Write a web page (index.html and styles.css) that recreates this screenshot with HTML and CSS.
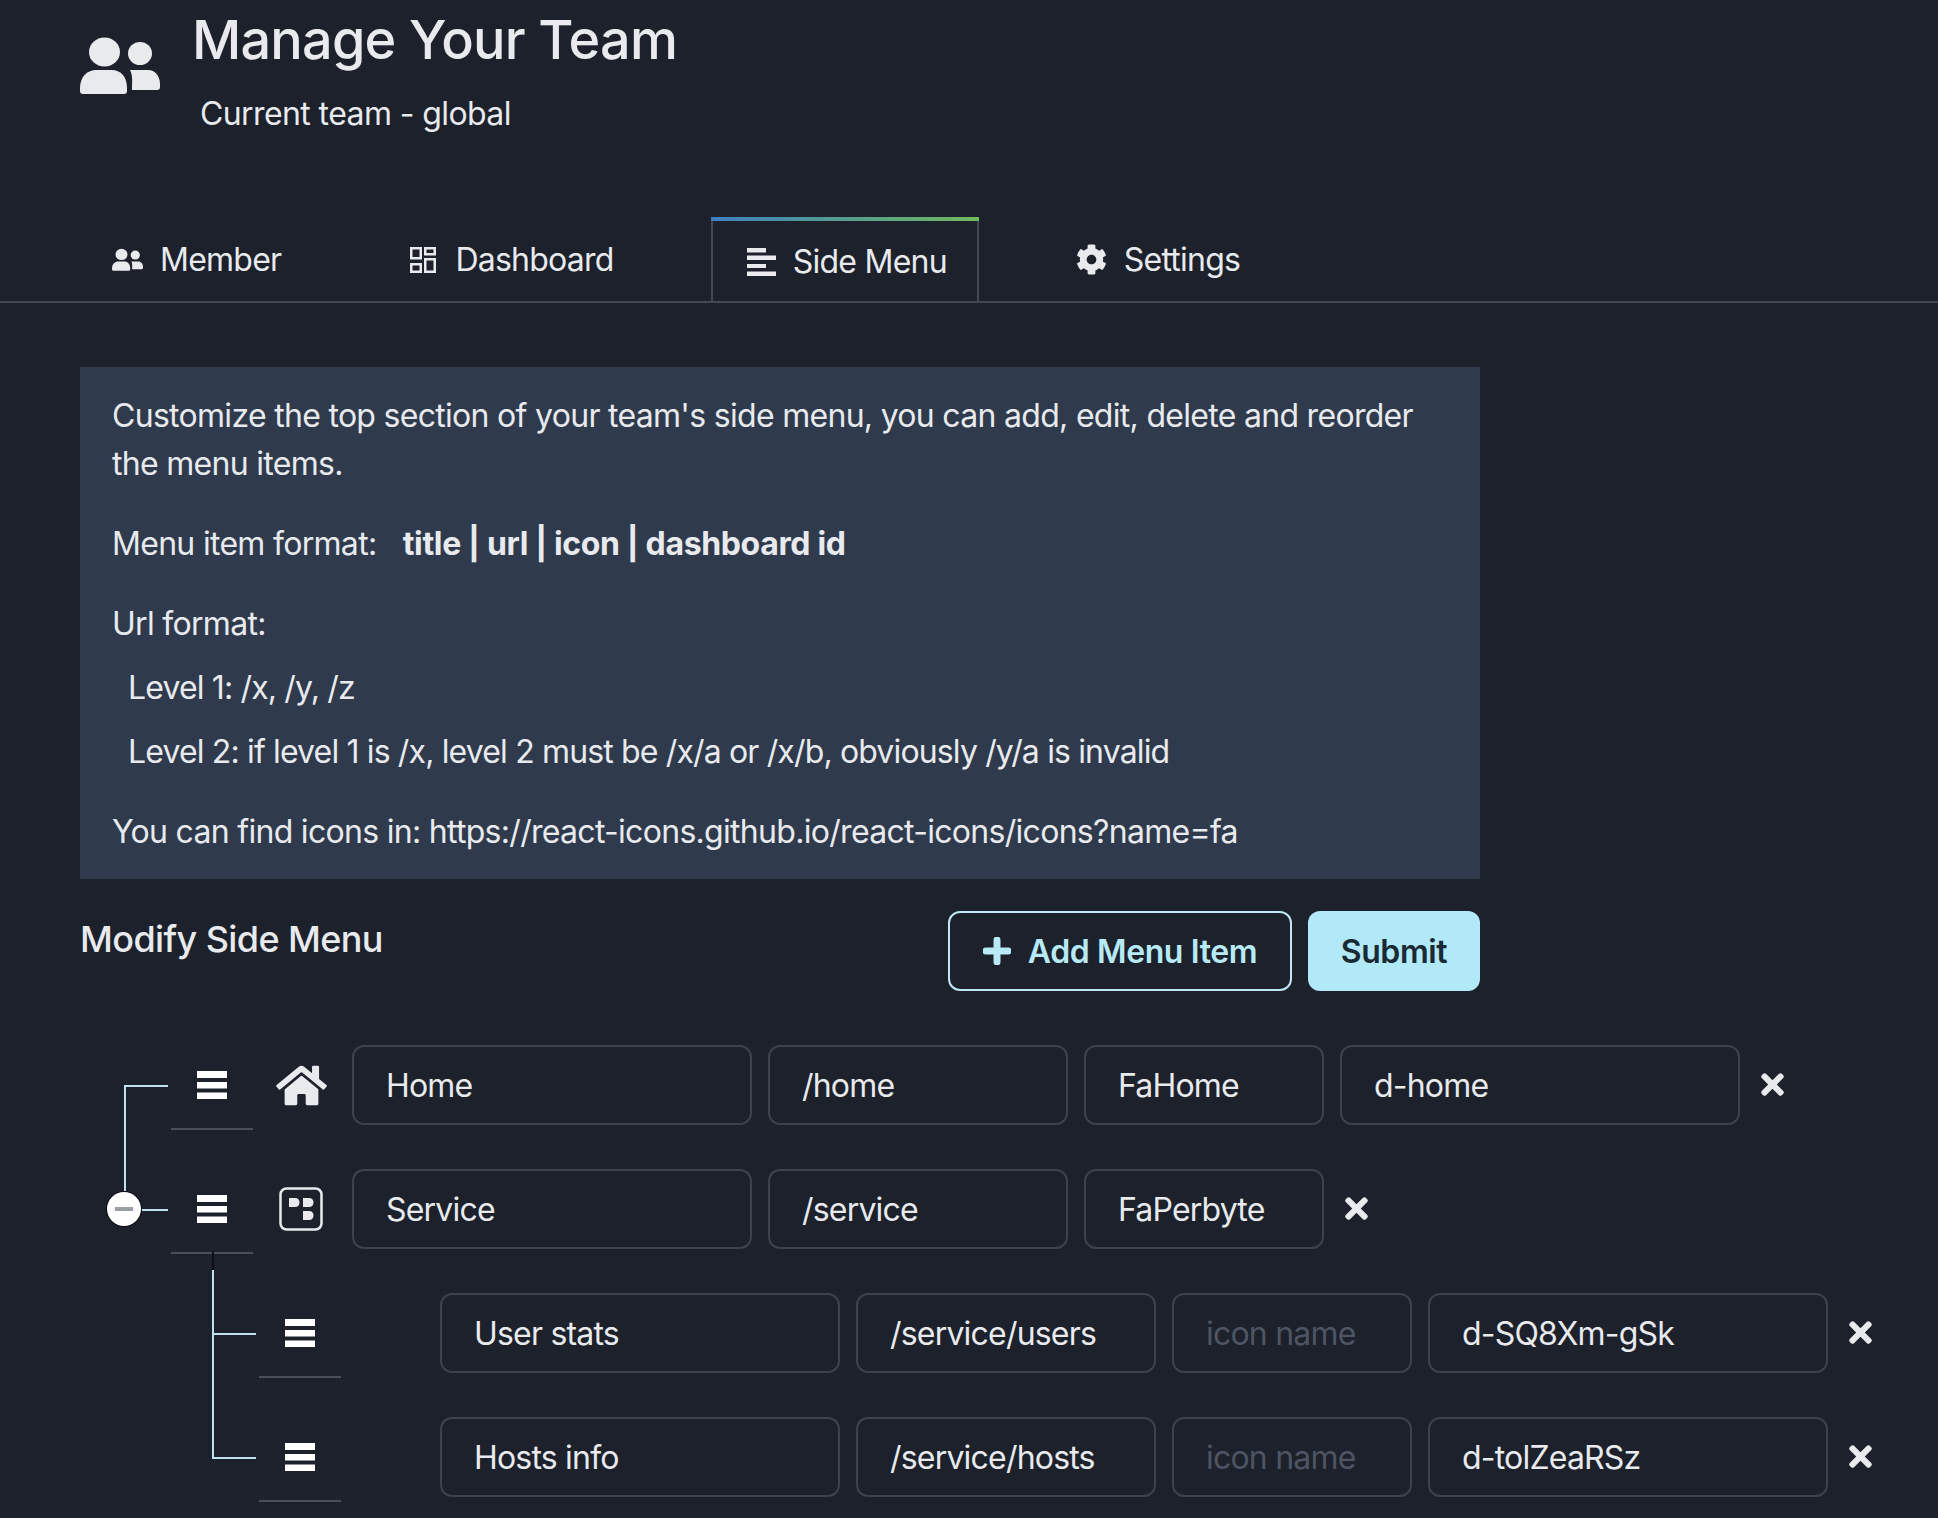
FILE: index.html
```html
<!DOCTYPE html>
<html lang="en">
<head>
    <meta charset="UTF-8">
    <meta name="viewport" content="width=device-width, initial-scale=1.0">
    <title>Manage Your Team</title>
    <link rel="stylesheet" href="styles.css">
</head>
<body>
    <svg class="defs" width="0" height="0">
        <symbol id="i-users" viewBox="0 0 80 58">
            <ellipse cx="24.500" cy="16" rx="15.500" ry="14.500"/>
            <ellipse cx="60" cy="17.500" rx="12" ry="11.500"/>
            <path d="M0 52C0 40 8 34 16 34H32C40 34 47 40 47 52V55Q47 58 44 58H3Q0 58 0 55Z"/>
            <path d="M50 34H68C75 34 80 40 80 48V51Q80 54 77 54H52C52 46 53 40 50 34Z"/>
        </symbol>
        <symbol id="i-bars" viewBox="0 0 30 28">
            <rect x="0" y="0" width="30" height="7"/>
            <rect x="0" y="11" width="30" height="6.500"/>
            <rect x="0" y="21.500" width="30" height="6.500"/>
        </symbol>
        <symbol id="i-times" viewBox="0 0 352 512">
            <path d="M242.72 256l100.07-100.07c12.28-12.28 12.28-32.19 0-44.48l-22.24-22.24c-12.28-12.28-32.19-12.28-44.48 0L176 189.28 75.93 89.21c-12.28-12.28-32.19-12.28-44.48 0L9.21 111.45c-12.28 12.28-12.28 32.19 0 44.48L109.28 256 9.21 356.07c-12.28 12.28-12.28 32.19 0 44.48l22.24 22.24c12.28 12.28 32.2 12.28 44.48 0L176 322.72l100.07 100.07c12.28 12.28 32.2 12.28 44.48 0l22.24-22.24c12.28-12.28 12.28-32.19 0-44.48L242.72 256z"/>
        </symbol>
    </svg>

    <div class="container">
        <div class="header">
            <svg class="team-icon"><use href="#i-users"/></svg>
            <div>
                <h1>Manage Your Team</h1>
                <p class="current-team">Current team - global</p>
            </div>
        </div>

        <div class="tabs">
            <div class="tab">
                <svg class="tab-icon member-icon"><use href="#i-users"/></svg>
                Member
            </div>
            <div class="tab">
                <svg class="tab-icon dash-icon" viewBox="0 0 26 26">
                    <rect x="1.250" y="1.250" width="9.500" height="10"/>
                    <rect x="15.250" y="1.250" width="9.500" height="6"/>
                    <rect x="1.250" y="17.250" width="9.500" height="7.500"/>
                    <rect x="15.250" y="12.250" width="9.500" height="12.500"/>
                </svg>
                Dashboard
            </div>
            <div class="tab active">
                <svg class="tab-icon menu-icon" viewBox="0 0 29 28">
                    <rect x="0" y="0" width="19" height="4.500"/>
                    <rect x="0" y="7.500" width="29" height="4.500"/>
                    <rect x="0" y="16" width="19" height="4"/>
                    <rect x="0" y="23.500" width="29" height="4.500"/>
                </svg>
                Side Menu
            </div>
            <div class="tab">
                <svg class="tab-icon cog-icon" viewBox="0 0 512 512">
                    <path d="M487.4 315.7l-42.6-24.6c4.3-23.2 4.3-47 0-70.2l42.6-24.6c4.9-2.8 7.1-8.6 5.5-14-11.1-35.6-30-67.8-54.7-94.6-3.8-4.1-10-5.1-14.8-2.3L380.8 110c-17.9-15.4-38.5-27.3-60.8-35.1V25.8c0-5.6-3.9-10.5-9.4-11.7-36.7-8.2-74.3-7.8-109.2 0-5.5 1.2-9.4 6.1-9.4 11.7V75c-22.2 7.9-42.8 19.8-60.8 35.1L88.7 85.5c-4.9-2.8-11-1.9-14.8 2.3-24.7 26.7-43.6 58.9-54.7 94.6-1.7 5.4.6 11.2 5.5 14L67.3 221c-4.3 23.2-4.3 47 0 70.2l-42.6 24.6c-4.9 2.8-7.1 8.6-5.5 14 11.1 35.6 30 67.8 54.7 94.6 3.8 4.1 10 5.1 14.8 2.3l42.6-24.6c17.9 15.4 38.5 27.3 60.8 35.1v49.2c0 5.6 3.9 10.5 9.4 11.7 36.7 8.2 74.3 7.8 109.2 0 5.5-1.2 9.4-6.1 9.4-11.7v-49.2c22.2-7.9 42.8-19.8 60.8-35.1l42.6 24.6c4.9 2.8 11 1.9 14.8-2.3 24.7-26.7 43.6-58.9 54.7-94.6 1.5-5.5-.7-11.3-5.6-14.1zM256 336c-44.1 0-80-35.9-80-80s35.9-80 80-80 80 35.9 80 80-35.9 80-80 80z"/>
                </svg>
                Settings
            </div>
        </div>

        <div class="content">
            <div class="info">
                <p>Customize the top section of your team's side menu, you can add, edit, delete and reorder the menu items.</p>
                <p>Menu item format: <b>title | url | icon | dashboard id</b></p>
                <p>Url format:</p>
                <p class="level">Level 1: /x, /y, /z</p>
                <p class="level">Level 2: if level 1 is /x, level 2 must be /x/a or /x/b, obviously /y/a is invalid</p>
                <p>You can find icons in: https://react-icons.github.io/react-icons/icons?name=fa</p>
            </div>

            <div class="toolbar">
                <h2>Modify Side Menu</h2>
                <div class="actions">
                    <button class="btn outline" type="button">
                        <svg class="plus" viewBox="0 0 28 28"><path d="M14 3v22M3 14h22"/></svg>
                        Add Menu Item
                    </button>
                    <button class="btn solid" type="button">Submit</button>
                </div>
            </div>
        </div>

        <div class="tree">
            <div class="line home-v"></div>
            <div class="line home-h"></div>
            <div class="line service-h"></div>
            <div class="collapse"><span></span></div>
            <div class="line dark-stub"></div>
            <div class="line child-v"></div>
            <div class="line child-h1"></div>
            <div class="line child-h2"></div>

            <div class="row">
                <div class="handle"><svg class="bars"><use href="#i-bars"/></svg></div>
                <div class="item-icon">
                    <svg class="home-icon" viewBox="0 0 576 512">
                        <path d="M280.37 148.26L96 300.11V464a16 16 0 0 0 16 16l112.06-.29a16 16 0 0 0 15.92-16V368a16 16 0 0 1 16-16h64a16 16 0 0 1 16 16v95.64a16 16 0 0 0 16 16.05L464 480a16 16 0 0 0 16-16V300L295.67 148.26a12.19 12.19 0 0 0-15.3 0zM571.6 251.47L488 182.56V44.05a12 12 0 0 0-12-12h-56a12 12 0 0 0-12 12v72.61L318.47 43a48 48 0 0 0-61 0L4.34 251.47a12 12 0 0 0-1.6 16.9l25.5 31A12 12 0 0 0 45.15 301l235.22-193.74a12.19 12.19 0 0 1 15.3 0L530.9 301a12 12 0 0 0 16.9-1.6l25.5-31a12 12 0 0 0-1.7-16.93z"/>
                    </svg>
                </div>
                <input class="field title" type="text" value="Home">
                <input class="field url" type="text" value="/home">
                <input class="field icon-name" type="text" value="FaHome">
                <input class="field dash" type="text" value="d-home">
                <svg class="remove"><use href="#i-times"/></svg>
            </div>

            <div class="row">
                <div class="handle"><svg class="bars"><use href="#i-bars"/></svg></div>
                <div class="item-icon">
                    <svg class="perbyte-icon" viewBox="0 0 44 44">
                        <rect x="1.500" y="1.500" width="41" height="41" rx="6" fill="none" stroke="currentColor" stroke-width="2.500"/>
                        <path d="M10 11h6c3 0 4.500 2 4.500 4.500S19 20 16 20h-6z"/>
                        <path d="M24 11h6c3 0 4.500 2 4.500 4.500S33 20 30 20h-6z"/>
                        <path d="M24 24h6c3 0 4.500 2 4.500 4.500S33 33 30 33h-6z"/>
                    </svg>
                </div>
                <input class="field title" type="text" value="Service">
                <input class="field url" type="text" value="/service">
                <input class="field icon-name" type="text" value="FaPerbyte">
                <svg class="remove"><use href="#i-times"/></svg>
            </div>

            <div class="row child">
                <div class="handle"><svg class="bars"><use href="#i-bars"/></svg></div>
                <div class="item-icon"></div>
                <input class="field title" type="text" value="User stats">
                <input class="field url" type="text" value="/service/users">
                <input class="field icon-name" type="text" placeholder="icon name">
                <input class="field dash" type="text" value="d-SQ8Xm-gSk">
                <svg class="remove"><use href="#i-times"/></svg>
            </div>

            <div class="row child">
                <div class="handle"><svg class="bars"><use href="#i-bars"/></svg></div>
                <div class="item-icon"></div>
                <input class="field title" type="text" value="Hosts info">
                <input class="field url" type="text" value="/service/hosts">
                <input class="field icon-name" type="text" placeholder="icon name">
                <input class="field dash" type="text" value="d-tolZeaRSz">
                <svg class="remove"><use href="#i-times"/></svg>
            </div>
        </div>
    </div>
</body>
</html>
```

FILE: styles.css
```css
*{
    margin: 0;
    padding: 0;
    box-sizing: border-box;
}
body{
    background-color: #1c212b;
    color: #e8eaee;
    font-family: Inter, "Noto Sans", sans-serif;
    font-size: 32px;
    line-height: 48px;
    letter-spacing: -0.7px;
    height: 1518px;
    overflow: hidden;
}
svg{
    fill: currentColor;
    display: block;
}
.defs{
    position: absolute;
}

/* header */
.header{
    display: flex;
    padding-left: 80px;
    height: 217px;
}
.team-icon{
    width: 80px;
    height: 58px;
    margin-top: 36px;
    margin-right: 32px;
}
h1{
    font-size: 54px;
    font-weight: 500;
    line-height: 80px;
    letter-spacing: -0.8px;
}
.current-team{
    margin-top: 10px;
    margin-left: 8px;
    letter-spacing: -0.6px;
}

/* tabs */
.tabs{
    display: flex;
    gap: 65px;
    padding-left: 80px;
    height: 86px;
    border-bottom: 2px solid #424854;
}
.tab{
    display: flex;
    align-items: center;
    gap: 17px;
    padding: 0 32px;
    height: 84px;
    padding-top: 1px;
    letter-spacing: -0.75px;
}
.tab.active{
    width: 268px;
    height: 86px;
    padding: 4px 0 0 34px;
    border: 2px solid #424854;
    border-top: 0;
    border-bottom: 0;
    position: relative;
}
.tab.active::before{
    content: "";
    position: absolute;
    top: 0;
    left: -2px;
    right: -2px;
    height: 4px;
    background: linear-gradient(90deg, #3f7fc0, #6fbb5e);
}
.member-icon{
    width: 31px;
    height: 23px;
}
.dash-icon{
    width: 26px;
    height: 26px;
    margin-right: 2px;
    fill: none;
    stroke: currentColor;
    stroke-width: 2.500;
}
.menu-icon{
    width: 29px;
    height: 28px;
}
.cog-icon{
    width: 31px;
    height: 31px;
}

/* info box */
.content{
    width: 1400px;
    margin-left: 80px;
}
.info{
    margin-top: 64px;
    padding: 25px 32px 23px;
    background-color: #2f3b4d;
}
.info p{
    margin-bottom: 32px;
}
.info p:last-child{
    margin-bottom: 0;
}
.info b{
    margin-left: 18px;
    font-weight: 700;
    letter-spacing: -0.35px;
}
.info .level{
    margin-top: -16px;
    padding-left: 16px;
    letter-spacing: -0.85px;
}

/* title + buttons */
.toolbar{
    display: flex;
    justify-content: space-between;
    margin-top: 32px;
}
h2{
    font-size: 36px;
    font-weight: 450;
    line-height: 56px;
    letter-spacing: -0.6px;
}
.actions{
    display: flex;
    gap: 16px;
}
.btn{
    display: flex;
    align-items: center;
    justify-content: center;
    height: 80px;
    border-radius: 12px;
    font-family: inherit;
    font-size: 32px;
    font-weight: 600;
    letter-spacing: -0.4px;
    white-space: nowrap;
}
.outline{
    gap: 17px;
    width: 344px;
    background: transparent;
    border: 2px solid #bfe8f5;
    color: #b7eaf5;
}
.solid{
    width: 172px;
    background-color: #b2e9f8;
    border: 0;
    color: #1a2a35;
}
.plus{
    width: 28px;
    height: 28px;
    fill: none;
    stroke: currentColor;
    stroke-width: 7;
    stroke-linecap: round;
}

/* menu tree */
.tree{
    position: relative;
    margin-top: 54px;
    margin-left: 80px;
}
.row{
    display: flex;
    align-items: flex-start;
    height: 80px;
    margin-bottom: 44px;
    padding-left: 91px;
}
.row.child{
    padding-left: 179px;
}
.handle{
    display: flex;
    align-items: center;
    justify-content: center;
    width: 82px;
    height: 85px;
    padding-bottom: 3px;
    border-bottom: 2px solid #4a4f5a;
    flex-shrink: 0;
}
.bars{
    width: 30px;
    height: 28px;
    fill: #fff;
}
.item-icon{
    display: flex;
    align-items: center;
    justify-content: center;
    width: 96px;
    height: 80px;
    margin-right: 3px;
    flex-shrink: 0;
}
.home-icon{
    width: 51px;
    height: 45px;
}
.perbyte-icon{
    width: 44px;
    height: 44px;
}
.field{
    height: 80px;
    margin-right: 16px;
    padding: 0 32px;
    background: transparent;
    border: 2px solid #3c424e;
    border-radius: 12px;
    color: #e8eaee;
    font-family: inherit;
    font-size: 32px;
    letter-spacing: -0.8px;
    outline: none;
    flex-shrink: 0;
}
.field::placeholder{
    color: #4e5462;
}
.title,
.dash{
    width: 400px;
}
.url{
    width: 300px;
}
.icon-name{
    width: 240px;
}
.remove{
    width: 23px;
    height: 33px;
    margin-top: 23px;
    margin-left: 5px;
    flex-shrink: 0;
}

/* connector lines lie over the rows */
.line{
    position: absolute;
    background-color: #bfe3ee;
}
.home-v{
    left: 44px;
    top: 40px;
    width: 2px;
    height: 106px;
}
.home-h{
    left: 44px;
    top: 40px;
    width: 44px;
    height: 2px;
}
.service-h{
    left: 62px;
    top: 164px;
    width: 26px;
    height: 2px;
}
.collapse{
    position: absolute;
    left: 27px;
    top: 147px;
    width: 34px;
    height: 34px;
    display: flex;
    align-items: center;
    justify-content: center;
    background-color: #fff;
    border-radius: 50%;
    box-shadow: 0 0 0 1px #0c0e13;
}
.collapse span{
    width: 18px;
    height: 4px;
    background-color: #9a9ea6;
}
.dark-stub{
    left: 132px;
    top: 207px;
    width: 2px;
    height: 18px;
    background-color: #0c0e13;
}
.child-v{
    left: 132px;
    top: 225px;
    width: 2px;
    height: 189px;
}
.child-h1{
    left: 132px;
    top: 288px;
    width: 44px;
    height: 2px;
}
.child-h2{
    left: 132px;
    top: 412px;
    width: 44px;
    height: 2px;
}
```
